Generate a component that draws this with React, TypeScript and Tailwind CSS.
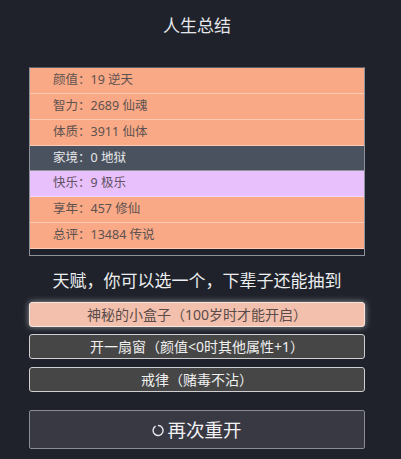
import React from "react";

const rows: { label: string; value: string; bg: string; text: string }[] = [
  { label: "颜值", value: "19 逆天", bg: "bg-[#f9a986]", text: "text-[#5e5250]" },
  { label: "智力", value: "2689 仙魂", bg: "bg-[#f9a986]", text: "text-[#5e5250]" },
  { label: "体质", value: "3911 仙体", bg: "bg-[#f9a986]", text: "text-[#5e5250]" },
  { label: "家境", value: "0 地狱", bg: "bg-[#4a5260]", text: "text-[#e8e8ea]" },
  { label: "快乐", value: "9 极乐", bg: "bg-[#e8c0fc]", text: "text-[#5e5262]" },
  { label: "享年", value: "457 修仙", bg: "bg-[#f9a986]", text: "text-[#5e5250]" },
  { label: "总评", value: "13484 传说", bg: "bg-[#f9a986]", text: "text-[#5e5250]" },
];

export default function App() {
  return (
    <div
      className="w-[401px] h-[459px] bg-[#1f222b] overflow-hidden"
      style={{ fontFamily: '"Noto Sans", "Noto Sans CJK SC", sans-serif' }}
    >
      <div className="ml-[29px] w-[336px] flex flex-col">
        <div className="pt-[14px] h-[38px] leading-[24px] text-[17px] text-[#e6e7ea] text-center">
          人生总结
        </div>
        <div className="mt-[29px] border border-[#8e939b] border-t-[#5a5f69] pb-[6px] flex flex-col">
          {rows.map((r, i) => (
            <div
              key={i}
              className={`h-[25.85px] flex items-center pl-[23px] text-[12.5px] border-b border-white/40 ${r.bg} ${r.text}`}
            >
              {r.label}：{r.value}
            </div>
          ))}
        </div>
        <div className="mt-[13px] h-[24px] leading-[24px] text-[17px] text-[#eceef0] text-center">
          天赋，你可以选一个，下辈子还能抽到
        </div>
        <div className="mt-[9px] flex flex-col gap-[7.5px]">
          <div className="h-[25px] rounded-[3px] border border-[#f5e6e0] bg-[#f3c0ad] text-[#5a4c4a] text-[14px] flex items-center justify-center shadow-[0_0_6px_rgba(255,255,255,0.55)]">
            神秘的小盒子（100岁时才能开启）
          </div>
          <div className="h-[25px] rounded-[3px] border border-[#cfcfd2] bg-[#464646] text-[#f0f0f0] text-[14px] flex items-center justify-center">
            开一扇窗（颜值&lt;0时其他属性+1）
          </div>
          <div className="h-[25px] rounded-[3px] border border-[#cfcfd2] bg-[#464646] text-[#f0f0f0] text-[14px] flex items-center justify-center">
            戒律（赌毒不沾）
          </div>
        </div>
        <div className="mt-[18px] h-[39px] rounded-[2px] border border-[#8a8b94] bg-[#393944] text-[#f2f2f4] text-[18.5px] flex items-center justify-center">
          <svg width="13" height="13" viewBox="0 0 13 13" className="mr-[2px] mt-[2px]" fill="none">
            <path
              d="M3.2 2.4 A5 5 0 1 0 6.5 1.5"
              stroke="#e8e8ee"
              strokeWidth="1.4"
              strokeLinecap="round"
            />
          </svg>
          再次重开
        </div>
      </div>
    </div>
  );
}
